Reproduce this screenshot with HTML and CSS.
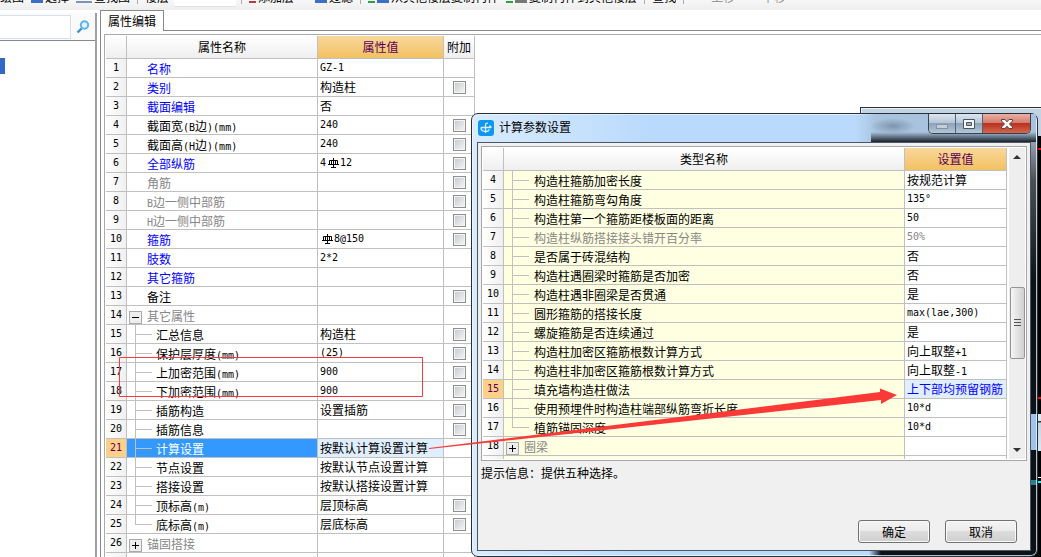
FILE: index.html
```html
<!DOCTYPE html>
<html lang="zh-CN">
<head>
<meta charset="utf-8">
<title>属性编辑</title>
<link rel="stylesheet" href="styles.css">
</head>
<body>
<div class="toolbar">
  <div class="tools">
    <span class="tool">绘图</span>
    <span class="tool"><i class="ico blue"></i>选择</span>
    <span class="tool"><i class="ico steel"></i>查找图</span>
    <span class="sep"></span>
    <span class="tool">楼层</span>
  </div>
  <span class="combo"></span>
  <div class="tools">
    <span class="sep"></span>
    <span class="tool"><i class="ico red"></i>添加层</span>
    <span class="tool late"><i class="ico blue"></i>过滤</span>
    <span class="sep"></span>
    <span class="tool"><i class="ico green"></i><i class="ico blue"></i>从其他楼层复制构件</span>
    <span class="tool"><i class="ico green"></i><i class="ico grey"></i>复制构件到其他楼层</span>
    <span class="sep"></span>
    <span class="tool">查找</span>
    <span class="sep"></span>
    <span class="tool off">上移</span>
    <span class="tool off">下移</span>
  </div>
</div>
<div class="work">
  <aside class="side">
    <div class="search">
      <input type="text" aria-label="搜索">
      <button class="find" aria-label="查找"><svg width="14" height="14" viewBox="0 0 14 14"><circle cx="8.500" cy="5" r="3.700" fill="#e4f4fd" stroke="#5fb4ea" stroke-width="2"/><path d="M5.500 8.500L1.500 12.500" stroke="#3a8fd0" stroke-width="2.400"/></svg></button>
    </div>
    <div class="list"><div class="picked"></div></div>
  </aside>
  <main class="main">
    <div class="tabs"><button class="tab">属性编辑</button></div>
    <div class="panel">
      <table class="grid props">
        <colgroup><col class="c-num"><col class="c-name"><col class="c-val"><col class="c-add"></colgroup>
        <thead><tr><th></th><th>属性名称</th><th class="hot">属性值</th><th>附加</th></tr></thead>
        <tbody>
          <tr><th>1</th><td class="name key">名称</td><td class="lat">GZ-1</td><td></td></tr>
          <tr><th>2</th><td class="name key">类别</td><td>构造柱</td><td class="tick"><input type="checkbox" aria-label="类别"></td></tr>
          <tr><th>3</th><td class="name key">截面编辑</td><td>否</td><td></td></tr>
          <tr><th>4</th><td class="name">截面宽<span class="lat">(B</span>边<span class="lat">)(mm)</span></td><td class="lat">240</td><td class="tick"><input type="checkbox" aria-label="截面宽"></td></tr>
          <tr><th>5</th><td class="name">截面高<span class="lat">(H</span>边<span class="lat">)(mm)</span></td><td class="lat">240</td><td class="tick"><input type="checkbox" aria-label="截面高"></td></tr>
          <tr><th>6</th><td class="name key">全部纵筋</td><td class="lat">4<svg class="bar" viewBox="0 0 12 10"><path d="M2.500 2.500h8v4h-8zM6.500 0v10M1 6.500h11M4.500 2.500v4M8.500 2.500v4M4 9.500h5" fill="none" stroke="#000"/></svg>12</td><td class="tick"><input type="checkbox" aria-label="全部纵筋"></td></tr>
          <tr><th>7</th><td class="name dim">角筋</td><td></td><td class="tick"><input type="checkbox" aria-label="角筋"></td></tr>
          <tr><th>8</th><td class="name dim"><span class="lat">B</span>边一侧中部筋</td><td></td><td class="tick"><input type="checkbox" aria-label="B边一侧中部筋"></td></tr>
          <tr><th>9</th><td class="name dim"><span class="lat">H</span>边一侧中部筋</td><td></td><td class="tick"><input type="checkbox" aria-label="H边一侧中部筋"></td></tr>
          <tr><th>10</th><td class="name key">箍筋</td><td class="lat"><svg class="bar" viewBox="0 0 12 10"><path d="M2.500 2.500h8v4h-8zM6.500 0v10M1 6.500h11M4.500 2.500v4M8.500 2.500v4M4 9.500h5" fill="none" stroke="#000"/></svg>8@150</td><td class="tick"><input type="checkbox" aria-label="箍筋"></td></tr>
          <tr><th>11</th><td class="name key">肢数</td><td class="lat">2*2</td><td></td></tr>
          <tr><th>12</th><td class="name key">其它箍筋</td><td></td><td></td></tr>
          <tr><th>13</th><td class="name">备注</td><td></td><td class="tick"><input type="checkbox" aria-label="备注"></td></tr>
          <tr><th>14</th><td class="group dim"><button class="fold" aria-label="折叠"></button>其它属性</td><td></td><td></td></tr>
          <tr><th>15</th><td class="branch">汇总信息</td><td>构造柱</td><td class="tick"><input type="checkbox" aria-label="汇总信息"></td></tr>
          <tr><th>16</th><td class="branch">保护层厚度<span class="lat">(mm)</span></td><td class="lat">(25)</td><td class="tick"><input type="checkbox" aria-label="保护层厚度"></td></tr>
          <tr><th>17</th><td class="branch">上加密范围<span class="lat">(mm)</span></td><td class="lat">900</td><td class="tick"><input type="checkbox" aria-label="上加密范围"></td></tr>
          <tr><th>18</th><td class="branch">下加密范围<span class="lat">(mm)</span></td><td class="lat">900</td><td class="tick"><input type="checkbox" aria-label="下加密范围"></td></tr>
          <tr><th>19</th><td class="branch">插筋构造</td><td>设置插筋</td><td class="tick"><input type="checkbox" aria-label="插筋构造"></td></tr>
          <tr><th>20</th><td class="branch">插筋信息</td><td></td><td class="tick"><input type="checkbox" aria-label="插筋信息"></td></tr>
          <tr class="current"><th>21</th><td class="branch chosen">计算设置</td><td class="pale">按默认计算设置计算</td><td></td></tr>
          <tr><th>22</th><td class="branch">节点设置</td><td>按默认节点设置计算</td><td></td></tr>
          <tr><th>23</th><td class="branch">搭接设置</td><td>按默认搭接设置计算</td><td></td></tr>
          <tr><th>24</th><td class="branch">顶标高<span class="lat">(m)</span></td><td>层顶标高</td><td class="tick"><input type="checkbox" aria-label="顶标高"></td></tr>
          <tr><th>25</th><td class="branch last">底标高<span class="lat">(m)</span></td><td>层底标高</td><td class="tick"><input type="checkbox" aria-label="底标高"></td></tr>
          <tr><th>26</th><td class="group dim"><button class="fold plus" aria-label="展开"></button>锚固搭接</td><td></td><td></td></tr>
          <tr><th></th><td class="group dim"><button class="fold plus" aria-label="展开"></button></td><td></td><td></td></tr>
        </tbody>
      </table>
    </div>
  </main>
</div>

<div class="backwin">
  <div class="backtitle"></div>
  <div class="canvas"><i class="ray r1"></i><i class="ray r2"></i><i class="strip"></i><i class="ray r3"></i><i class="ray r4"></i></div>
</div>

<section class="dialog" role="dialog" aria-label="计算参数设置">
  <header class="title">
    <svg class="logo" width="16" height="16" viewBox="0 0 16 16"><rect width="16" height="16" rx="3" fill="#0d96f2"/><path d="M3 7.500h10M7.500 13V5c0-1.500 1-2 2.500-1.800M3 7.500c0 2.500 2 4 4.500 4 2 0 3.500-1 3.500-2.200M11.200 5.800c1.500.2 2 .9 1.800 1.700" fill="none" stroke="#d8f0ff" stroke-width="1.300"/></svg>
    <span class="caption">计算参数设置</span>
    <div class="winbtns">
      <button class="wb min" aria-label="最小化"><svg width="12" height="5"><rect x="0.500" y="0.500" width="11" height="4" fill="#c3d0dc" stroke="#8494a6"/></svg></button>
      <button class="wb max" aria-label="最大化"><svg width="12" height="10"><path d="M.5.500h11v9H.5z" fill="#f4f6f8" stroke="#4a5560"/><path d="M3.500 3.500h5v3h-5z" fill="#9cb2c8" stroke="#4a5560"/></svg></button>
      <button class="wb close" aria-label="关闭"><svg width="12" height="10" viewBox="0 0 12 10"><path d="M.5.500h3.500L6 2.800 8 .5h3.500v1.500L8.500 5l3 3v1.500H8L6 7.200 4 9.500H.5V8l3-3-3-3z" fill="#f6f6f6" stroke="#5a4048"/></svg></button>
    </div>
  </header>
  <div class="body">
    <div class="frame">
      <div class="scroller">
        <table class="grid calc">
          <colgroup><col class="c-num2"><col><col class="c-set"></colgroup>
          <thead><tr><th></th><th>类型名称</th><th class="hot">设置值</th></tr></thead>
          <tbody>
            <tr><th>4</th><td class="branch">构造柱箍筋加密长度</td><td>按规范计算</td></tr>
            <tr><th>5</th><td class="branch">构造柱箍筋弯勾角度</td><td class="lat">135°</td></tr>
            <tr><th>6</th><td class="branch">构造柱第一个箍筋距楼板面的距离</td><td class="lat">50</td></tr>
            <tr><th>7</th><td class="branch dim">构造柱纵筋搭接接头错开百分率</td><td class="lat dim">50%</td></tr>
            <tr><th>8</th><td class="branch">是否属于砖混结构</td><td>否</td></tr>
            <tr><th>9</th><td class="branch">构造柱遇圈梁时箍筋是否加密</td><td>否</td></tr>
            <tr><th>10</th><td class="branch">构造柱遇非圈梁是否贯通</td><td>是</td></tr>
            <tr><th>11</th><td class="branch">圆形箍筋的搭接长度</td><td class="lat">max(lae,300)</td></tr>
            <tr><th>12</th><td class="branch">螺旋箍筋是否连续通过</td><td>是</td></tr>
            <tr><th>13</th><td class="branch">构造柱加密区箍筋根数计算方式</td><td>向上取整<span class="lat">+1</span></td></tr>
            <tr><th>14</th><td class="branch">构造柱非加密区箍筋根数计算方式</td><td>向上取整<span class="lat">-1</span></td></tr>
            <tr class="current"><th>15</th><td class="branch">填充墙构造柱做法</td><td class="pale key">上下部均预留钢筋</td></tr>
            <tr><th>16</th><td class="branch">使用预埋件时构造柱端部纵筋弯折长度</td><td class="lat">10*d</td></tr>
            <tr><th>17</th><td class="branch last">植筋锚固深度</td><td class="lat">10*d</td></tr>
            <tr><th>18</th><td class="group dim"><button class="fold plus" aria-label="展开"></button>圈梁</td><td></td></tr>
            <tr><th></th><td class="group"></td><td></td></tr>
          </tbody>
        </table>
      </div>
      <div class="vbar">
        <svg class="arr" width="8" height="4"><path d="M0 4L4 0l4 4z" fill="#333"/></svg>
        <span class="thumb"></span>
        <svg class="arr" width="8" height="4"><path d="M0 0h8L4 4z" fill="#333"/></svg>
      </div>
    </div>
    <p class="hint">提示信息：提供五种选择。</p>
    <div class="actions"><button class="btn">确定</button><button class="btn">取消</button></div>
  </div>
</section>

<svg class="marks" width="1041" height="557" viewBox="0 0 1041 557">
  <path d="M119.500 357.500h303v39h-303z" fill="none" stroke="#f53b3b"/>
  <path d="M429 448L880 392v-3.500l17 6.500-16 9v-4L429 449z" fill="#fb3a38"/>
</svg>
</body>
</html>
```
FILE: styles.css
```css
* { box-sizing: border-box; }
body {
  margin: 0;
  height: 100vh;
  overflow: hidden;
  position: relative;
  display: flex;
  flex-direction: column;
  background: #fff;
  color: #000;
  font: 12px/16px "Noto Sans CJK SC", sans-serif;
}
button, input { font: inherit; margin: 0; padding: 0; }
.lat { font-family: "DejaVu Sans Mono", "Noto Sans CJK SC", monospace; font-size: 10px; }
span.lat { line-height: 1; }

/* toolbar */
.toolbar { height: 10px; flex: none; display: flex; overflow: hidden; background: linear-gradient(#f7f7f7, #eee); }
.tools { display: flex; gap: 7px; height: 4px; }
.tool { display: flex; align-items: flex-end; height: 3px; overflow: hidden; white-space: nowrap; flex: none; gap: 2px; line-height: 12px; }
.tool.off { color: #999; margin-left: 20px; }
.tool.late { margin-left: 14px; }
.ico { width: 12px; height: 3px; background: #3d6fc8; }
.ico.steel { width: 16px; background: #7d93b8; height: 2px; }
.ico.red { width: 7px; background: #b04040; height: 2px; }
.ico.green { width: 7px; background: #2ea043; height: 2px; }
.ico.grey { background: #777; }
.sep { width: 1px; height: 4px; background: #aaa; flex: none; }
.combo { width: 62px; height: 7px; margin: 0 5px; background: #fff; border-bottom: 1px solid #e4e4e4; }

/* side list */
.work { flex: 1; min-height: 0; display: flex; }
.side { width: 97px; flex: none; margin-top: 3px; border-right: 2px solid #a0a0a4; display: flex; flex-direction: column; }
.search { display: flex; align-items: center; height: 28px; border-bottom: 1px solid #88888f; background: #fafafa; }
.search input { width: 71px; height: 24px; border: 1px solid #d6e0e8; border-left: 0; background: #fff; }
.find { width: 24px; height: 20px; border: 0; background: none; display: grid; place-items: center; }
.list { padding-top: 17px; }
.picked { width: 5px; height: 16px; background: #316ac5; }

/* property panel */
.main { flex: 1; min-width: 0; margin-left: 3px; border-left: 1px solid #88888f; display: flex; flex-direction: column; }
.tabs { height: 21px; flex: none; border-bottom: 1px solid #88888f; border-top: 0; }
.tab { height: 21px; width: 63px; border: 1px solid #88888f; border-width: 1px 1px 0 0; background: #fff; display: block; line-height: 18px; }
.panel { flex: 1; min-height: 0; margin: 3px 0 0 3px; padding: 1px; border: 1px solid #a9a9ae; border-width: 1px 0 0 1px; overflow: hidden; }

.grid { border-collapse: separate; border-spacing: 0; table-layout: fixed; }
.grid th, .grid td { height: 19px; padding: 0 0 0 2px; border: 1px solid #c0c0c0; border-width: 0 1px 1px 0; line-height: 16px; font-weight: normal; text-align: left; white-space: nowrap; overflow: hidden; }
.grid tbody th { padding: 0; text-align: center; font-family: "DejaVu Sans Mono", monospace; font-size: 10px; background: linear-gradient(90deg, #fff, #f0f0f0); }
.grid thead th { height: 23px; padding: 0; text-align: center; background: linear-gradient(#fff, #efefef); }
.grid thead .hot { color: #5a005a; background: linear-gradient(#f9d79b, #f2c162); }
.grid .current th { color: #5a005a; background: #fdd087; }
.props { width: 369px; }
.c-num { width: 21px; }
.c-name { width: 191px; }
.c-val { width: 126px; }
.c-add { width: 31px; }
.c-num2 { width: 21px; }
.c-set { width: 102px; }
.grid .name { padding: 1px 0 0 20px; }
.grid .branch {
  padding: 1px 0 0 29px;
  background-image: linear-gradient(#c0c0c0, #c0c0c0), linear-gradient(#c0c0c0, #c0c0c0);
  background-repeat: no-repeat;
  background-position: 8px 0, 8px 9px;
  background-size: 1px 100%, 17px 1px;
}
.grid .branch.last { background-size: 1px 9px, 17px 1px; }
.grid .group { padding: 1px 0 0 2px; }
.grid .key { color: #00f; }
.grid .dim { color: #868686; }
.grid .chosen { color: #fff; background-color: #3399ff; }
.grid .pale { background: #e0efff; }
.grid .tick { padding: 0; text-align: center; }
.tick input { appearance: none; display: block; width: 13px; height: 13px; margin: 0 auto; border: 1px solid #8e8f8f; outline: 1px solid #f4f4f4; outline-offset: -2px; background: linear-gradient(135deg, #c4c8ce, #f6f6f6); }
.bar { width: 12px; height: 10px; margin: 0 1px; vertical-align: -2px; }
.fold { width: 13px; height: 13px; margin-right: 5px; vertical-align: -2px; border: 1px solid #aaa; background: linear-gradient(#000, #000) center/7px 1px no-repeat, #eee; }
.fold.plus { background: linear-gradient(#000, #000) center/7px 1px no-repeat, linear-gradient(#000, #000) center/1px 7px no-repeat, #eee; }

/* window behind the dialog */
.backwin { position: absolute; left: 860px; right: 0; top: 107px; bottom: 0; border: 1px solid #333; border-width: 1px 0 0 1px; display: flex; flex-direction: column; }
.backtitle { height: 28px; background: #c3d3e4; border: 1px solid #e8f0f8; border-width: 1px 0 0 1px; }
.canvas { flex: 1; background: #000; display: flex; flex-direction: column; }
.ray { height: 2px; flex: none; background: #f00; }
.r1 { margin-top: 12px; }
.r2 { margin-top: 247px; }
.strip { height: 37px; flex: none; margin-top: 15px; background: linear-gradient(#dbe7f4 7px, #333 7px, #333 8px, #c3d3e4 9px, #dbe7f4); }
.r3 { height: 1px; margin-top: 26px; background: #fff; }
.r4 { margin-top: 3px; background: #0ff; }

/* dialog */
.dialog {
  position: absolute; left: 471px; right: 3px; top: 113px; bottom: 0;
  display: flex; flex-direction: column;
  padding: 0 6px 5px 5px;
  border: 1px solid #26303c; border-radius: 7px;
  box-shadow: inset 0 0 0 1px rgba(240, 248, 255, .75);
  background:
    linear-gradient(#9fc3ea, #9fc3ea) right 300px/7px 36px no-repeat,
    linear-gradient(#2b7f8a, #2b7f8a) right 366px/7px 5px no-repeat,
    linear-gradient(#9aa6b4, #4c5054 40px, #0c1218 140px) right 26px/7px 100% no-repeat,
    linear-gradient(90deg, transparent, #0c1218 12px) right bottom/168px 6px no-repeat,
    linear-gradient(90deg, #d9ebfd, #b9dafc 180px);
}
.title {
  height: 28px; flex: none; display: flex; align-items: flex-start; gap: 5px;
  margin: 0 -5px 0 -4px; padding-left: 5px;
  background:
    radial-gradient(ellipse, rgba(90, 110, 130, .55), transparent 70%) right 120px top 4px/46px 16px no-repeat,
    linear-gradient(transparent 18px, rgba(10, 15, 20, .9) 28px) right/165px 28px no-repeat,
    linear-gradient(90deg, transparent, #a9c3de 20px) right/180px 28px no-repeat;
}
.logo { margin-top: 6px; }
.caption { flex: 1; padding-top: 5px; }
.winbtns { display: flex; border: 1px solid #39434e; border-top: 0; border-radius: 0 0 5px 5px; overflow: hidden; margin-right: 5px; }
.wb { height: 19px; border: 0; display: grid; place-items: center; background: linear-gradient(#dce6f0, #b4c5d6 9px, #8ba1b8 9px, #b4c6d8); }
.min { width: 27px; border-right: 1px solid #56616e; padding-top: 5px; }
.max { width: 27px; border-right: 1px solid #56616e; }
.close { width: 47px; background: linear-gradient(#eab0a6, #d57c6c 9px, #b8301c 9px, #d4654c); }
.body { flex: 1; min-height: 0; padding: 3px 3px 0; background: #f0f0f0; border: 1px solid #4a5866; display: flex; flex-direction: column; }
.frame { height: 315px; flex: none; padding: 1px; border: 1px solid #a5a5aa; background: #fff; display: flex; }
.scroller { flex: 1; min-width: 0; overflow: hidden; }
.calc { width: 100%; }
.calc .branch, .calc .group { background-color: #ffffe1; }
.calc .branch { padding-left: 30px; }
.vbar { width: 16px; flex: none; margin-left: 2px; background: #eee; display: flex; flex-direction: column; align-items: center; }
.arr { margin: 7px 0; }
.thumb { width: 15px; height: 72px; margin: 121px 0 auto; border: 1px solid #959595; border-radius: 2px; background: repeating-linear-gradient(#555 0 1px, transparent 1px 3px) center/7px 9px no-repeat, linear-gradient(90deg, #f6f6f6, #d0d0d0); }
.hint { margin: 4px 0 0; line-height: 16px; }
.actions { margin-top: auto; padding: 0 10px 7px; display: flex; justify-content: flex-end; gap: 15px; }
.btn { width: 72px; height: 23px; border: 1px solid #707070; border-radius: 3px; background: linear-gradient(#f3f3f3, #ebebeb 50%, #dcdcdc 50%, #cfcfcf); box-shadow: inset 0 0 0 1px #fafafa; line-height: 18px; }

.marks { position: absolute; left: 0; top: 0; pointer-events: none; }
```
